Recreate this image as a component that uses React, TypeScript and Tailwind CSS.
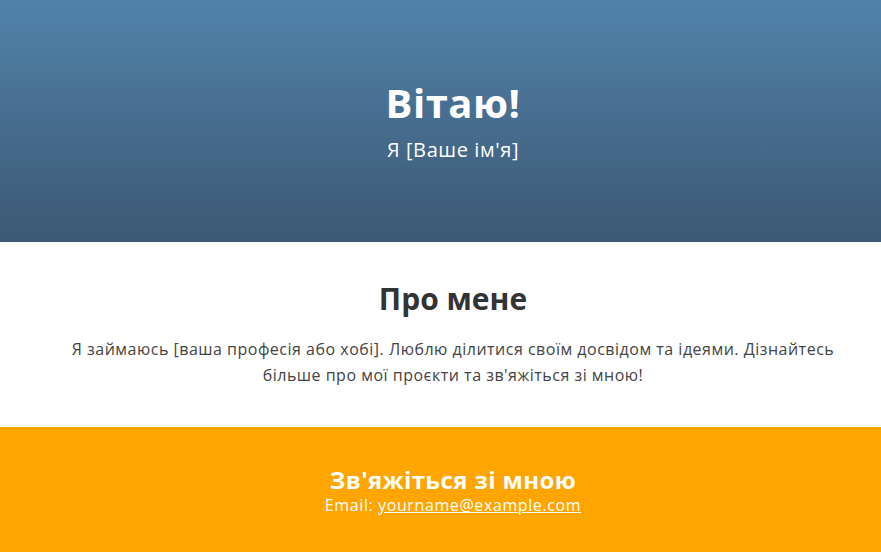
export default function App() {
  return (
    <div className="min-h-screen bg-white font-['Open_Sans',sans-serif]">
      {/* Hero */}
      <header className="bg-gradient-to-b from-[#5083ab] to-[#3d5873] pt-[79px] pb-[78px] pl-[25px] text-center text-white">
        <h1 className="text-[40px] font-bold leading-[48px] tracking-[0.5px]">Вітаю!</h1>
        <p className="mt-[9px] text-[20px] leading-[28px] tracking-[0.6px]">Я [Ваше ім'я]</p>
      </header>

      {/* About */}
      <section className="pt-[39px] pb-[39px] pl-[25px] text-center">
        <h2 className="text-[30px] font-bold leading-[36px] text-[#333]">Про мене</h2>
        <p className="mx-auto mt-[19px] max-w-[790px] text-[16px] leading-[26px] tracking-[0.5px] text-[#444]">
          Я займаюсь [ваша професія або хобі]. Люблю ділитися своїм досвідом та ідеями. Дізнайтесь
          більше про мої проєкти та зв'яжіться зі мною!
        </p>
      </section>

      {/* Contact */}
      <footer className="bg-[#ffa500] pt-[38px] pb-[40px] pl-[25px] text-center text-white">
        <h3 className="text-[24px] font-bold leading-[30px] tracking-[0.4px]">Зв'яжіться зі мною</h3>
        <p className="text-[16px] leading-[20px] tracking-[0.6px]">
          Email:{" "}
          <a href="mailto:yourname@example.com" className="underline">
            yourname@example.com
          </a>
        </p>
      </footer>
    </div>
  );
}
